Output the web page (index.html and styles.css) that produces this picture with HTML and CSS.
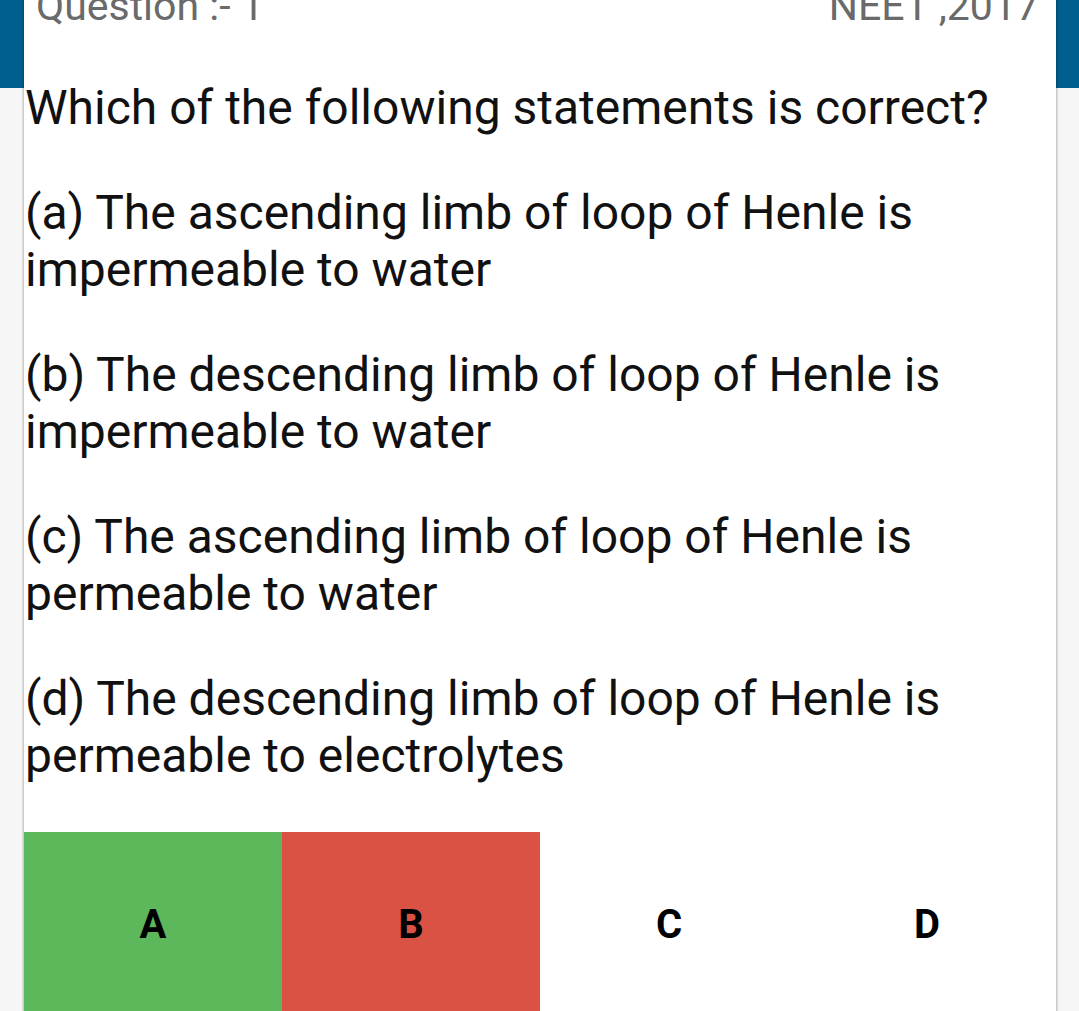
FILE: index.html
```html
<!DOCTYPE html>
<html>
<head>
<meta charset="utf-8">
<link rel="stylesheet" href="styles.css">
</head>
<body>
<div class="band"></div>
<div class="card">
  <div class="head">
    <span>Question :- 1</span>
    <span>NEET ,2017</span>
  </div>
  <div class="body">
    <p class="q">Which of the following statements is correct?</p>
    <p class="opt">(a) The ascending limb of loop of Henle is impermeable to water</p>
    <p class="opt">(b) The descending limb of loop of Henle is impermeable to water</p>
    <p class="opt">(c) The ascending limb of loop of Henle is permeable to water</p>
    <p class="opt">(d) The descending limb of loop of Henle is permeable to electrolytes</p>
  </div>
  <div class="answers">
    <div class="ans green">A</div>
    <div class="ans red">B</div>
    <div class="ans">C</div>
    <div class="ans">D</div>
  </div>
</div>
</body>
</html>
```

FILE: styles.css
```css
html, body {
  margin: 0;
  padding: 0;
  background: #f6f6f6;
  overflow: hidden;
  font-family: Roboto, "Noto Sans", sans-serif;
}
.band {
  height: 88px;
  background: #005f8e;
}
.card {
  position: relative;
  margin: -106px 23px 0 24px;
  background: #ffffff;
  box-shadow: -1px 0 2px rgba(0,0,0,0.25), 1px 0 2px rgba(0,0,0,0.25);
}
.head {
  display: flex;
  justify-content: space-between;
  padding: 0 17px 0 12px;
  font-size: 41px;
  line-height: 48px;
  color: #6a6a6a;
}
.body {
  padding: 49px 0 0 1px;
  color: #111111;
  font-size: 48px;
  line-height: 57px;
}
.body p {
  margin: 0 0 48px 0;
}
.body p.opt {
  padding-right: 60px;
}
.answers {
  display: grid;
  grid-template-columns: repeat(4, 1fr);
  margin-top: 0;
}
.ans {
  height: 184px;
  display: flex;
  align-items: center;
  justify-content: center;
  font-size: 40px;
  font-weight: 700;
  color: #000;
}
.green { background: #5cb85a; }
.red { background: #d95244; }
```
